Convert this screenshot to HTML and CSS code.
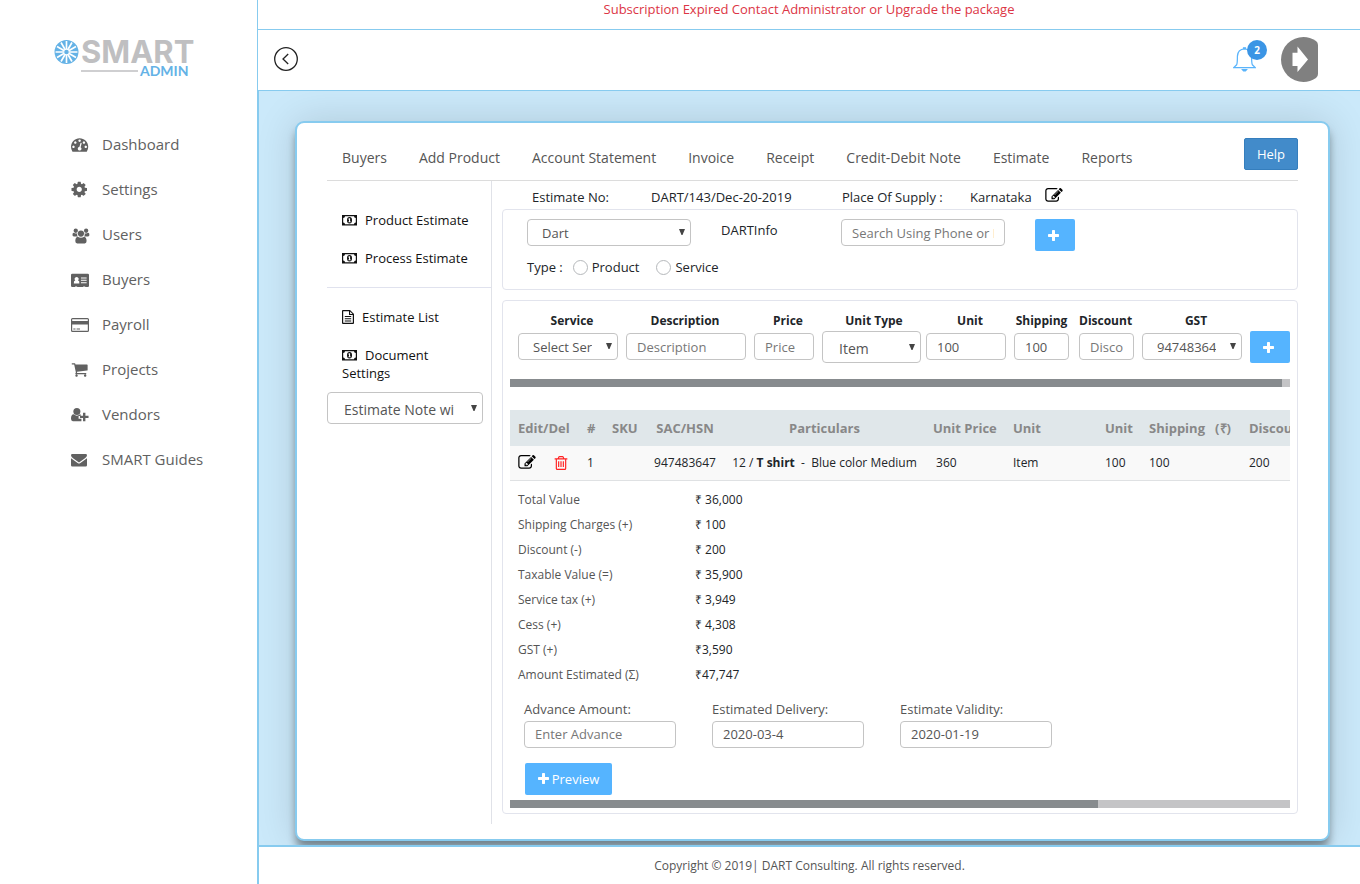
FILE: index.html
```html
<!DOCTYPE html>
<html lang="en">
<head>
<meta charset="utf-8">
<title>SMART Admin - Estimate</title>
<link rel="stylesheet" href="styles.css">
</head>
<body>
<svg class="sprite" aria-hidden="true">
  <symbol id="i-dash" viewBox="0 128 1792 1664" preserveAspectRatio="xMinYMid"><path d="M384 1152q0-53-37.500-90.500t-90.500-37.500-90.500 37.500-37.500 90.500 37.500 90.500 90.500 37.500 90.500-37.500 37.500-90.500zm192-448q0-53-37.500-90.500t-90.500-37.500-90.500 37.500-37.500 90.500 37.500 90.500 90.500 37.500 90.500-37.500 37.500-90.500zm428 481l101-382q6-26-7.500-48.500t-38.500-29.500-48 6.500-30 39.500l-101 382q-60 5-107 43.500t-63 98.500q-20 77 20 146t117 89 146-20 89-117q16-60-6-117t-72-91zm660-33q0-53-37.500-90.500t-90.500-37.500-90.500 37.500-37.500 90.500 37.500 90.500 90.500 37.500 90.500-37.500 37.500-90.500zm-640-640q0-53-37.500-90.500t-90.500-37.500-90.500 37.500-37.500 90.500 37.500 90.500 90.500 37.500 90.500-37.500 37.500-90.500zm448 192q0-53-37.500-90.500t-90.500-37.500-90.500 37.500-37.500 90.500 37.500 90.500 90.500 37.500 90.500-37.500 37.500-90.500zm320 448q0 261-141 483-19 29-54 29h-1402q-35 0-54-29-141-221-141-483 0-182 71-348t191-286 286-191 348-71 348 71 286 191 191 286 71 348z"/></symbol>
  <symbol id="i-cog" viewBox="80 160 1584 1584" preserveAspectRatio="xMinYMid"><path d="M1152 896q0-106-75-181t-181-75-181 75-75 181 75 181 181 75 181-75 75-181zm512-109v222q0 12-8 23t-20 13l-185 28q-19 54-39 91 35 50 107 138 10 12 10 25t-9 23q-27 37-99 108t-94 71q-12 0-26-9l-138-108q-44 23-91 38-16 136-29 186-7 28-36 28h-222q-14 0-24.500-8.500t-11.500-21.500l-28-184q-49-16-90-37l-141 107q-10 9-25 9-14 0-25-11-126-114-165-168-7-10-7-23 0-12 8-23 15-21 51-66.500t54-70.500q-27-50-41-99l-183-27q-13-2-21-12.500t-8-23.500v-222q0-12 8-23t19-13l186-28q14-46 39-92-40-57-107-138-10-12-10-24 0-10 9-23 26-36 98.500-107.500t94.500-71.500q13 0 26 10l138 107q44-23 91-38 16-136 29-186 7-28 36-28h222q14 0 24.500 8.500t11.500 21.500l28 184q49 16 90 37l142-107q9-9 24-9 13 0 25 10 129 119 165 170 7 8 7 22 0 12-8 23-15 21-51 66.500t-54 70.500q26 50 41 98l183 28q13 2 21 12.500t8 23.500z"/></symbol>
  <symbol id="i-users" viewBox="-1 -1 18 17"><circle cx="3.500" cy="3" r="2.300"/><circle cx="14.500" cy="3" r="2.300"/><path d="M0 7.500Q0 5.200 1.300 5.200Q3.500 6.300 5 5.600Q4.600 8 5.700 9H1.500Q0 9 0 7.500ZM18 7.500Q18 5.200 16.700 5.200Q14.500 6.300 13 5.600Q13.400 8 12.300 9H16.500Q18 9 18 7.500Z"/><circle cx="9" cy="6" r="3.300"/><path d="M5.600 9.300Q9 11.600 12.400 9.300Q15 9.700 15 14Q15 16.500 13 16.500H5Q3 16.500 3 14Q3 9.700 5.600 9.300Z"/></symbol>
  <symbol id="i-card" viewBox="0 -1 19 15"><path fill-rule="evenodd" d="M1.300 0H17.700Q19 0 19 1.300V12.700Q19 14 17.700 14H15V13.300H12.800V14H6.500V13.300H4.300V14H1.300Q0 14 0 12.700V1.300Q0 0 1.300 0ZM3 10.200H8.800Q9.200 7.200 7.400 7Q8.300 6.200 8.100 4.900Q7.700 3.300 6 3.300Q4.200 3.300 3.800 4.900Q3.600 6.200 4.500 7Q2.700 7.200 3 10.200ZM10.500 3.800V4.800H16.500V3.800ZM10.500 6.300V7.300H16.500V6.300ZM10.500 8.800V9.800H16.500V8.800Z"/></symbol>
  <symbol id="i-credit" viewBox="0 0 18 14"><path fill-rule="evenodd" d="M1.500 0H16.500Q18 0 18 1.500V12.500Q18 14 16.500 14H1.500Q0 14 0 12.500V1.500Q0 0 1.500 0ZM1.200 1.200V3H16.800V1.200ZM1.200 6.500V12.800H16.800V6.500ZM2.300 10.500H4.500V11.500H2.300ZM5.600 10.500H9V11.500H5.600Z"/></symbol>
  <symbol id="i-cart" viewBox="0 128 1792 1664" preserveAspectRatio="xMinYMid"><path d="M704 1536q0 52-38 90t-90 38-90-38-38-90 38-90 90-38 90 38 38 90zm896 0q0 52-38 90t-90 38-90-38-38-90 38-90 90-38 90 38 38 90zm128-1088v512q0 24-16.500 42.500t-40.500 21.500l-1044 122q13 60 13 70 0 16-24 64h920q26 0 45 19t19 45-19 45-45 19h-1024q-26 0-45-19t-19-45q0-11 8-31.500t16-36 21.500-40 15.500-29.500l-177-823h-204q-26 0-45-19t-19-45 19-45 45-19h256q16 0 28.500 6.500t19.500 15.500 13 24.500 8 26 5.500 29.500 4.500 26h1201q26 0 45 19t19 45z"/></symbol>
  <symbol id="i-vendor" viewBox="0 0 19 15"><circle cx="6.200" cy="3.700" r="3.700"/><path d="M2.800 6.800Q6.200 9.700 9.600 6.800L10.200 7V8.500H8V11.500H11V14H2Q0 14 0 11.500Q0 7 2.800 6.800ZM12.700 5H15.200V8.200H18.500V10.700H15.200V14H12.700V10.700H9.500V8.200H12.700Z"/></symbol>
  <symbol id="i-mail" viewBox="0 -2 16 16" preserveAspectRatio="xMinYMid"><path d="M1.300 0H14.700Q16 0 16 1.300Q16 3 14 4.300L8 8.500L2 4.300Q0 3 0 1.300Q0 0 1.300 0ZM0 4.200L7 9.200Q8 9.900 9 9.200L16 4.200V11.200Q16 12.500 14.700 12.500H1.300Q0 12.500 0 11.200Z"/></symbol>
  <symbol id="i-edit" viewBox="0 128 1792 1536"><path d="M888 1184l116-116-152-152-116 116v56h96v96h56zm440-720q-16-16-33 1l-350 350q-17 17-1 33t33-1l350-350q17-17 1-33zm80 594v190q0 119-84.500 203.500t-203.500 84.500h-832q-119 0-203.500-84.500t-84.500-203.500v-832q0-119 84.500-203.500t203.500-84.500h832q63 0 117 25 15 7 18 23 3 17-9 29l-49 49q-14 14-32 8-23-6-45-6h-832q-66 0-113 47t-47 113v832q0 66 47 113t113 47h832q66 0 113-47t47-113v-126q0-13 9-22l64-64q15-15 35-7t20 29zm-96-738l288 288-672 672h-288v-288zm444 132l-92 92-288-288 92-92q28-28 68-28t68 28l152 152q28 28 28 68t-28 68z"/></symbol>
  <symbol id="i-plus" viewBox="192 128 1408 1408"><path d="M1600 736v192q0 40-28 68t-68 28h-416v416q0 40-28 68t-68 28h-192q-40 0-68-28t-28-68v-416h-416q-40 0-68-28t-28-68v-192q0-40 28-68t68-28h416v-416q0-40 28-68t68-28h192q40 0 68 28t28 68v416h416q40 0 68 28t28 68z"/></symbol>
  <symbol id="i-trash" viewBox="192 128 1408 1536"><path d="M704 736v576q0 14-9 23t-23 9h-64q-14 0-23-9t-9-23v-576q0-14 9-23t23-9h64q14 0 23 9t9 23zm256 0v576q0 14-9 23t-23 9h-64q-14 0-23-9t-9-23v-576q0-14 9-23t23-9h64q14 0 23 9t9 23zm256 0v576q0 14-9 23t-23 9h-64q-14 0-23-9t-9-23v-576q0-14 9-23t23-9h64q14 0 23 9t9 23zm128 724v-948h-896v948q0 22 7 40.500t14.500 27 10.500 8.500h832q3 0 10.500-8.500t14.500-27 7-40.500zm-672-1076h448l-48-117q-7-9-17-11h-317q-10 2-17 11zm928 32v64q0 14-9 23t-23 9h-96v948q0 83-47 143.500t-113 60.500h-832q-66 0-113-58.500t-47-141.500v-952h-96q-14 0-23-9t-9-23v-64q0-14 9-23t23-9h309l70-167q15-37 54-63t79-26h320q40 0 79 26t54 63l70 167h309q14 0 23 9t9 23z"/></symbol>
  <symbol id="i-money" viewBox="0 0 15 11"><path fill-rule="evenodd" d="M0 0H15V10.500H0ZM3 1.200Q3 2.900 1.200 3V7.500Q3 7.600 3 9.300H12Q12 7.600 13.800 7.500V3Q12 2.900 12 1.200Z"/><path fill-rule="evenodd" d="M7.500 2Q10 2 10 5.250Q10 8.500 7.500 8.500Q5 8.500 5 5.250Q5 2 7.500 2ZM6.300 3.700V4.500H7V6.400H6.300V7.200H8.800V6.400H8.100V3.300H7.200Z"/></symbol>
  <symbol id="i-file" viewBox="0 0 12 14"><path fill-rule="evenodd" d="M1 0H8L12 4V13Q12 14 11 14H1Q0 14 0 13V1Q0 0 1 0ZM1.200 1.200V12.800H10.800V5H7V1.200ZM8.100 1.500V3.900H10.500ZM2.800 6H9.200V7H2.800ZM2.800 8.200H9.200V9.200H2.800ZM2.800 10.400H9.200V11.400H2.800Z"/></symbol>
</svg>

<div class="app">
  <aside class="sidebar">
    <a class="logo" href="#">
      <svg class="wheel" viewBox="-12 -12 24 24" aria-hidden="true">
        <circle r="11.500" fill="#64b2e6"/>
        <g stroke="#fff" stroke-width="1.600">
          <path d="M0-10.500V10.500M-10.500 0H10.500"/>
          <path transform="rotate(30)" d="M0-10.500V10.500M-10.500 0H10.500"/>
          <path transform="rotate(60)" d="M0-10.500V10.500M-10.500 0H10.500"/>
        </g>
        <circle r="2.200" fill="#64b2e6"/>
      </svg>
      <span class="logo-text">
        <span class="logo-main">SMART</span>
        <span class="logo-sub">ADMIN</span>
      </span>
    </a>
    <nav class="menu">
      <a href="#"><svg class="ic"><use href="#i-dash"/></svg>Dashboard</a>
      <a href="#"><svg class="ic"><use href="#i-cog"/></svg>Settings</a>
      <a href="#"><svg class="ic"><use href="#i-users"/></svg>Users</a>
      <a href="#"><svg class="ic"><use href="#i-card"/></svg>Buyers</a>
      <a href="#"><svg class="ic"><use href="#i-credit"/></svg>Payroll</a>
      <a href="#"><svg class="ic"><use href="#i-cart"/></svg>Projects</a>
      <a href="#"><svg class="ic"><use href="#i-vendor"/></svg>Vendors</a>
      <a href="#"><svg class="ic"><use href="#i-mail"/></svg>SMART Guides</a>
    </nav>
  </aside>

  <div class="main">
    <div class="notice">Subscription Expired Contact Administrator or Upgrade the package</div>
    <header class="topbar">
      <button class="plain" aria-label="Back">
        <svg class="back line" viewBox="0 0 24 24"><circle cx="12" cy="12" r="11.300"/><path d="M14.200 7L9 12L14.200 17"/></svg>
      </button>
      <div class="tools">
        <button class="plain bell" aria-label="Notifications">
          <svg class="line" viewBox="0 0 24 26"><path d="M12 1.800Q5 2.200 4.600 9.500Q4.600 17 3.800 18.500L.8 21.400H23.200L20.200 18.500Q19.400 17 19.400 9.500Q19 2.200 12 1.800Z"/><path d="M9.800 23.500H14.200L13 25H11ZM11 .8H13V1.500H11Z" fill="#5ab4fb"/></svg>
          <span class="badge">2</span>
        </button>
        <button class="plain" aria-label="Log out">
          <svg class="avatar" viewBox="0 0 37 45"><path d="M22.500 0Q29 0 35 4Q37 5.500 37 8V37Q37 39.500 35 41Q29 45 22.500 45A22.500 22.500 0 0 1 22.500 0Z" fill="#808080"/><path d="M11.500 15.800H16.500V9.500L27 22.500L16.500 35V29H11.500Z" fill="#fff"/></svg>
        </button>
      </div>
    </header>

    <main class="content">
      <section class="card">
        <nav class="tabs">
          <a href="#">Buyers</a><a href="#">Add Product</a><a href="#">Account Statement</a><a href="#">Invoice</a><a href="#">Receipt</a><a href="#">Credit-Debit Note</a><a href="#">Estimate</a><a href="#">Reports</a>
          <button class="help">Help</button>
        </nav>
        <div class="body">
          <div class="side">
            <div class="links first">
              <a href="#"><svg class="money"><use href="#i-money"/></svg>Product Estimate</a>
              <a href="#"><svg class="money"><use href="#i-money"/></svg>Process Estimate</a>
            </div>
            <div class="links">
              <a href="#"><svg class="file"><use href="#i-file"/></svg>Estimate List</a>
              <a href="#"><svg class="money"><use href="#i-money"/></svg>Document Settings</a>
            </div>
            <select class="field big" aria-label="Estimate note"><option>Estimate Note with</option></select>
          </div>

          <div class="work">
            <div class="meta">
              <span>Estimate No:</span><span>DART/143/Dec-20-2019</span><span>Place Of Supply :</span>
              <span>Karnataka <button class="plain edit" aria-label="Edit place"><svg><use href="#i-edit"/></svg></button></span>
            </div>
            <div class="panel who">
              <div class="who-row">
                <select class="field" aria-label="Company"><option>Dart</option></select>
                <span>DARTInfo</span>
                <input class="field" type="text" placeholder="Search Using Phone or Name" aria-label="Search">
                <button class="btn" aria-label="Add buyer"><svg><use href="#i-plus"/></svg></button>
              </div>
              <div class="type">
                <span>Type :</span>
                <label><input type="radio" name="t">Product</label>
                <label><input type="radio" name="t">Service</label>
              </div>
            </div>

            <div class="panel items">
              <div class="entry">
                <label for="f1">Service</label><label class="snug" for="f2">Description</label><label for="f3">Price</label><label for="f4">Unit Type</label><label for="f5">Unit</label><label class="snug" for="f6">Shipping</label><label class="snug" for="f7">Discount</label><label for="f8">GST</label><span></span>
                <select id="f1" class="field"><option>Select Service</option></select>
                <input id="f2" class="field" type="text" placeholder="Description">
                <input id="f3" class="field" type="text" placeholder="Price">
                <select id="f4" class="field big wide"><option>Item</option></select>
                <input id="f5" class="field" type="text" value="100">
                <input id="f6" class="field tight" type="text" value="100">
                <input id="f7" class="field" type="text" placeholder="Discount">
                <select id="f8" class="field"><option>947483647</option></select>
                <button class="btn" aria-label="Add item"><svg><use href="#i-plus"/></svg></button>
              </div>
              <div class="bar"><div style="width:99%"></div></div>

              <div class="scroll">
                <table class="grid">
                  <colgroup><col class="c-edit"><col class="c-no"><col class="c-sku"><col class="c-sac"><col class="c-part"><col class="c-price"><col class="c-type"><col class="c-unit"><col class="c-ship"><col class="c-disc"></colgroup>
                  <thead><tr><th>Edit/Del</th><th>#</th><th>SKU</th><th class="mid">SAC/HSN</th><th class="mid">Particulars</th><th>Unit Price</th><th>Unit</th><th>Unit</th><th>Shipping &nbsp; (₹)</th><th>Discount</th></tr></thead>
                  <tbody><tr>
                    <td><div class="acts"><button class="plain edit" aria-label="Edit"><svg><use href="#i-edit"/></svg></button><button class="plain del" aria-label="Delete"><svg><use href="#i-trash"/></svg></button></div></td>
                    <td>1</td><td></td><td class="mid">947483647</td><td class="mid">12 / <b>T shirt</b> &nbsp;-&nbsp; Blue color Medium</td><td>&nbsp;360</td><td>Item</td><td>100</td><td>100</td><td>200</td>
                  </tr></tbody>
                </table>
              </div>

              <dl class="sums">
                <dt>Total Value</dt><dd>₹ 36,000</dd>
                <dt>Shipping Charges (+)</dt><dd>₹ 100</dd>
                <dt>Discount (-)</dt><dd>₹ 200</dd>
                <dt>Taxable Value (=)</dt><dd>₹ 35,900</dd>
                <dt>Service tax (+)</dt><dd>₹ 3,949</dd>
                <dt>Cess (+)</dt><dd>₹ 4,308</dd>
                <dt>GST (+)</dt><dd>₹3,590</dd>
                <dt>Amount Estimated (Σ)</dt><dd>₹47,747</dd>
              </dl>

              <div class="dates">
                <label>Advance Amount:<input class="field" type="text" placeholder="Enter Advance"></label>
                <label>Estimated Delivery:<input class="field" type="text" value="2020-03-4"></label>
                <label>Estimate Validity:<input class="field" type="text" value="2020-01-19"></label>
              </div>
              <button class="btn preview"><svg><use href="#i-plus"/></svg>Preview</button>
              <div class="bar low"><div style="width:75.4%"></div></div>
            </div>
          </div>
        </div>
      </section>
    </main>
    <footer class="foot">Copyright © 2019| DART Consulting. All rights reserved.</footer>
  </div>
</div>
</body>
</html>
```
FILE: styles.css
```css
* { box-sizing: border-box; }
body { margin: 0; font: 13px/18px "Open Sans", sans-serif; color: #212529; background: #fff; }
a { color: inherit; text-decoration: none; }
svg { fill: currentColor; display: block; }
button, input, select { font: inherit; color: inherit; margin: 0; }
.sprite { position: absolute; width: 0; height: 0; }
.plain { background: none; border: 0; padding: 0; }
.line { fill: none; stroke: #222; stroke-width: 1.300; }

.app { display: flex; min-height: 100vh; }
.sidebar { flex: 0 0 257px; }
.main { flex: 1; min-width: 0; display: flex; flex-direction: column; border-left: 1px solid #87cbef; }

.logo { display: flex; gap: 2px; padding: 39px 0 0 54px; }
.wheel { width: 25px; height: 26px; }
.logo-text { display: flex; flex-direction: column; }
.logo-main { font-family: Inter, sans-serif; font-weight: 700; font-size: 31px; line-height: 26px; color: #bfbfc1; }
.logo-sub { display: flex; align-items: center; gap: 2px; font-family: Lato, sans-serif; font-weight: 700; font-size: 14px; line-height: 11px; color: #64b2e6; }
.logo-sub::before { content: ""; width: 57px; height: 2px; background: #cfcfd1; }
.menu { display: flex; flex-direction: column; padding: 46px 0 0 71px; font-size: 15px; line-height: 45px; color: #616161; }
.menu a { display: flex; align-items: center; gap: 13px; }
.ic { width: 18px; height: 16px; overflow: visible; }
symbol { overflow: visible; }

.notice { height: 30px; line-height: 19px; text-align: center; color: #dc3545; border-bottom: 1px solid #87cbef; }
.topbar { height: 61px; display: flex; align-items: center; justify-content: space-between; padding: 0 42px 2px 16px; border-bottom: 1px solid #87cbef; }
.back { width: 24px; height: 24px; }
.tools { display: flex; align-items: center; gap: 25px; }
.bell { position: relative; }
.bell svg { width: 23px; height: 25px; stroke: #5ab4fb; }
.badge { position: absolute; left: 14px; top: -7px; width: 20px; height: 20px; border-radius: 10px; background: #3b95e5; color: #fff; font-weight: 700; font-size: 10px; line-height: 20px; }
.avatar { width: 37px; height: 45px; }

.content { flex: 1; overflow: hidden; background: #cbe9fa; border-left: 1px solid #87cbef; padding: 30px 30px 4px 36px; }
.card { background: #fff; border: 2px solid #87cbef; border-radius: 9px; padding: 0 30px 15px; box-shadow: 0 8px 8px -1px rgba(0, 0, 0, .4), 0 0 40px rgba(0, 0, 0, .14); }
.tabs { display: flex; align-items: center; gap: 32px; height: 58px; padding: 5px 0 0 15px; border-bottom: 1px solid #dcdcdc; font-size: 14px; line-height: 20px; color: #555; }
.tabs a { padding-top: 8px; }
.help { margin-left: auto; width: 54px; height: 32px; background: #428bca; border: 1px solid #357ebd; border-radius: 2px; color: #fff; font-size: 13px; }

.body { display: flex; }
.side { flex: 0 0 165px; border-right: 1px solid #e0e2e8; }
.links { display: flex; flex-direction: column; padding-top: 10px; color: #111; }
.links a { padding: 10px 15px; }
.links svg { display: inline-block; vertical-align: -1px; }
.first { padding: 20px 0 10px; border-bottom: 1px solid #e0e2ee; }
.money { width: 15px; height: 11px; margin-right: 8px; }
.links .file { width: 12px; height: 14px; margin-right: 8px; vertical-align: -2px; }

.field { width: 100%; height: 27px; border: 1px solid #c4c4c4; border-radius: 4px; background: #fff; color: #555; padding: 0 10px; min-width: 0; }
.field::placeholder { color: #777; opacity: 1; }
select.field { appearance: none; padding: 0 25px 0 14px; background: #fff url("data:image/svg+xml,%3Csvg xmlns='http://www.w3.org/2000/svg' width='6' height='7' viewBox='0 0 6 7'%3E%3Cpath d='M0 0H6L3.500 6H2.500Z' fill='%23444'/%3E%3C/svg%3E") no-repeat right 5px top 9px / 6px 7px; }
select.field.big { height: 32px; font-size: 14px; padding: 3px 28px 0 16px; background-position: right 5px top 12px; }
.side .field { width: 156px; display: block; }

.work { flex: 1; min-width: 0; padding: 0 0 10px 10px; }
.meta { height: 28px; padding: 7px 0 0 30px; display: grid; grid-template-columns: 119fr 191fr 128fr 328fr; }
.meta span { display: flex; gap: 13px; white-space: nowrap; }
.edit svg { width: 18px; height: 15px; color: #000; }
.meta .edit { align-self: start; }
.panel { border: 1px solid #e2e4ed; border-radius: 4px; }
.who { padding: 9px 0 13px 24px; }
.who-row { display: grid; grid-template-columns: 194fr 120fr 194fr 262fr; line-height: 22px; }
.who-row .field { width: auto; margin-right: 30px; }
.btn { display: flex; align-items: center; justify-content: center; gap: 3px; width: 40px; height: 32px; padding: 0 4px 0 0; background: #55b4ff; border: 0; border-radius: 2px; color: #fff; }
.btn svg { width: 11px; height: 11px; }
.type { display: flex; padding-top: 7px; line-height: 18px; }
.type label { display: flex; align-items: center; gap: 4px; margin-left: 10px; }
.type label + label { margin-left: 17px; }
.type input { appearance: none; width: 15px; height: 15px; border: 1px solid #b5b8bb; border-radius: 50%; background: #fff; }

.items { margin-top: 10px; padding: 11px 7px 5px; overflow: hidden; }
.entry { display: grid; grid-template-columns: 108px 128px 68px 104px 88px 65px 63px 108px 1fr; row-gap: 1px; padding-left: 8px; }
.entry label { text-align: center; font-weight: 700; font-size: 12px; }
.entry .snug { padding-right: 10px; }
.entry .field { width: auto; margin: 2px 8px 0 0; }
.entry .wide { margin: 0 5px 0 0; }
.entry .tight { margin-right: 10px; }
.bar { height: 8px; margin-top: 16px; background: #c4c4c6; }
.bar div { height: 8px; background: #878b8e; }

.scroll { margin-top: 23px; overflow: hidden; }
.grid { table-layout: fixed; width: 1035px; border-collapse: collapse; }
.grid th { height: 36px; padding: 0 8px; background: #e0e7ea; color: #888; text-align: left; white-space: nowrap; }
.grid td { height: 34px; padding: 0 8px; background: #f9f9f9; font-size: 12px; white-space: nowrap; border-bottom: 1px solid #dfe1e3; }
.grid .mid { text-align: center; }
.c-edit { width: 69px; } .c-no { width: 25px; } .c-sku { width: 42px; } .c-sac { width: 78px; } .c-part { width: 201px; }
.c-price { width: 80px; } .c-type { width: 92px; } .c-unit { width: 44px; } .c-ship { width: 100px; }
.acts { display: flex; align-items: center; gap: 18px; }
.del svg { width: 14px; height: 14px; color: #f22; }

.sums { display: grid; grid-template-columns: 177px 1fr; margin: 6px 0 0; padding-left: 8px; font-size: 12px; line-height: 25px; }
.sums dt { color: #555; }
.sums dd { margin: 0; }
.dates { display: flex; gap: 36px; padding: 13px 0 0 14px; color: #555; }
.dates label { width: 152px; }
.dates .field { display: block; margin-top: 3px; }
.preview { width: 87px; padding: 0; margin: 15px 0 0 15px; }
.low { margin-top: 5px; }

.foot { height: 39px; border-top: 2px solid #87cbef; border-left: 1px solid #87cbef; text-align: center; font-size: 12px; line-height: 37px; color: #555; }
```
